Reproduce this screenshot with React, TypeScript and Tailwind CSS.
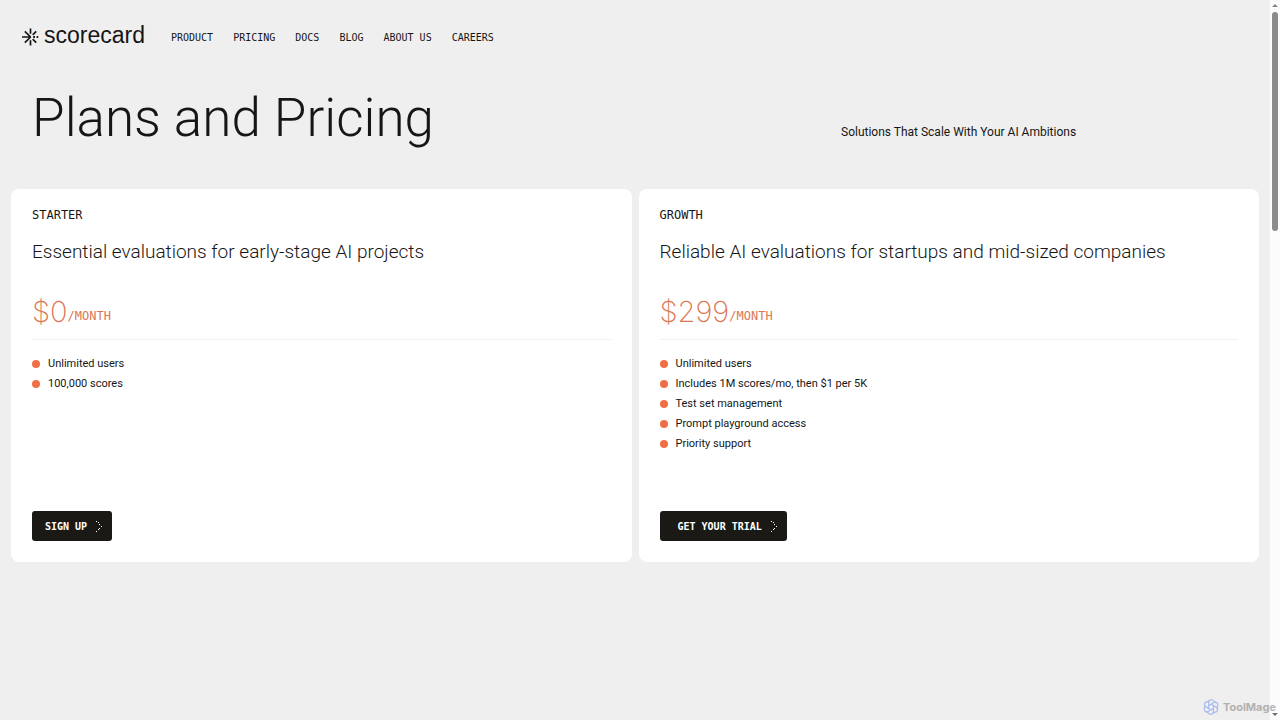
const sans = "font-['Roboto','Liberation_Sans',sans-serif]";
const mono = "font-['DejaVu_Sans_Mono','Liberation_Mono',monospace]";

const navItems = ['PRODUCT', 'PRICING', 'DOCS', 'BLOG', 'ABOUT US', 'CAREERS'];

type Plan = {
  name: string;
  tagline: string;
  price: string;
  features: string[];
  action: string;
  buttonPadding: string;
};

const plans: Plan[] = [
  {
    name: 'STARTER',
    tagline: 'Essential evaluations for early-stage AI projects',
    price: '$0',
    features: ['Unlimited users', '100,000 scores'],
    action: 'SIGN UP',
    buttonPadding: 'pl-[13px]',
  },
  {
    name: 'GROWTH',
    tagline: 'Reliable AI evaluations for startups and mid-sized companies',
    price: '$299',
    features: [
      'Unlimited users',
      'Includes 1M scores/mo, then $1 per 5K',
      'Test set management',
      'Prompt playground access',
      'Priority support',
    ],
    action: 'GET YOUR TRIAL',
    buttonPadding: 'pl-[18px]',
  },
];

function LogoMark() {
  return (
    <svg className="h-[18px] w-[17px]" viewBox="0 0 17 18" fill="none" stroke="currentColor" strokeWidth="1.7" aria-hidden="true">
      <path d="M8.5 .5v5.3M8.5 12.2v5.3M0 9h8.5M2.8 3.3l5.9 5.7M2.8 14.7l5.9-5.7M10.7 6.8l3.5-3.5M10.7 11.2l3.5 3.5" />
      <path d="M11.2 9h1.8M14.6 9h1.6" strokeWidth="1.8" />
    </svg>
  );
}

function DottedChevron() {
  const dots = [[0, 0], [2, 1], [3, 3], [5, 5], [3, 7], [2, 8], [0, 10]];
  return (
    <svg className="h-[11px] w-[6px]" viewBox="0 0 6 11" fill="currentColor" aria-hidden="true">
      {dots.map(([x, y]) => (
        <rect key={y} x={x} y={y} width="1" height="1" />
      ))}
    </svg>
  );
}

function PlanCard({ plan }: { plan: Plan }) {
  return (
    <section className="flex flex-col rounded-lg bg-white px-[21px] pt-[17px] pb-[21px]">
      <h2 className={`text-[12px] leading-[18px] ${mono}`}>{plan.name}</h2>
      <p className="mt-4 text-[19px] leading-[24px] font-light">{plan.tagline}</p>
      <p className="mt-7 flex items-end border-b border-[#f1f1f1] pb-[7px] text-[#dc7654]">
        <span className="font-['Inter',sans-serif] text-[29px] leading-[40px] font-extralight">{plan.price}</span>
        <span className={`text-[12px] leading-[32px] ${mono}`}>/MONTH</span>
      </p>
      <ul className="mt-4 grid gap-1 text-[11px] leading-[16px]">
        {plan.features.map((f) => (
          <li key={f} className="flex items-center gap-2 before:size-2 before:rounded-full before:bg-[#f26f46]">
            {f}
          </li>
        ))}
      </ul>
      <div className="mt-auto pt-[59px]">
        <button
          type="button"
          className={`flex h-[30px] items-center gap-[9px] rounded-[3px] bg-[#1a1915] pr-[10px] text-[10px] font-bold text-white ${plan.buttonPadding} ${mono}`}
        >
          {plan.action}
          <DottedChevron />
        </button>
      </div>
    </section>
  );
}

function Scrollbar() {
  return (
    <div className="flex w-[10px] shrink-0 flex-col items-center justify-between bg-[#fcfcfc] py-1" aria-hidden="true">
      <div className="flex flex-col items-center gap-[5px]">
        <svg className="h-[3px] w-[6px]" viewBox="0 0 6 3" fill="#858585"><path d="M3 0l3 3H0z" /></svg>
        <div className="h-[219px] w-[6px] rounded-full bg-[#8b8b8b]" />
      </div>
      <svg className="h-[3px] w-[6px]" viewBox="0 0 6 3" fill="#6f6f6f"><path d="M0 0h6L3 3z" /></svg>
    </div>
  );
}

function Watermark() {
  return (
    <div className="absolute right-1 bottom-[5px] flex items-center gap-1 opacity-60">
      <svg className="size-4" viewBox="0 0 16 16" fill="none" stroke="#7a9cec" strokeWidth="1.2" aria-hidden="true">
        {[0, 60, 120, 180, 240, 300].map((a) => (
          <path key={a} transform={`rotate(${a} 8 8)`} d="M8 5.2l-2.4 1.4V3.1A2.6 2.6 0 0 1 10.4 1.9L13 3.5" />
        ))}
      </svg>
      <span className="font-['Inter',sans-serif] text-[11px] leading-[16px] font-bold text-[#888]">ToolMage</span>
    </div>
  );
}

export default function App() {
  return (
    <div className={`relative flex min-h-screen bg-[#efefef] text-[#161616] ${sans}`}>
      <div className="min-w-0 flex-1">
        <header className="flex items-end gap-[26px] px-[22px] pt-[22px]">
          <a href="#home" className="flex items-center gap-[5px]">
            <LogoMark />
            <span className="pb-1 font-['Liberation_Sans',sans-serif] text-[23px] leading-[26px]">scorecard</span>
          </a>
          <nav className={`flex gap-5 pb-[6px] text-[10px] leading-[16px] ${mono}`}>
            {navItems.map((item) => (
              <a key={item} href={`#${item.toLowerCase().replace(' ', '-')}`}>{item}</a>
            ))}
          </nav>
        </header>
        <main>
          <div className="grid grid-cols-[2fr_1fr] items-end gap-[7px] px-6 pt-[31px] pb-9">
            <h1 className="pl-2 text-[53px] leading-[70px] font-light">Plans and Pricing</h1>
            <p className="pb-[13px] text-[12px] leading-[16px]">Solutions That Scale With Your AI Ambitions</p>
          </div>
          <div className="grid grid-cols-2 gap-[7px] px-[11px]">
            {plans.map((plan) => (
              <PlanCard key={plan.name} plan={plan} />
            ))}
          </div>
        </main>
      </div>
      <Scrollbar />
      <Watermark />
    </div>
  );
}
